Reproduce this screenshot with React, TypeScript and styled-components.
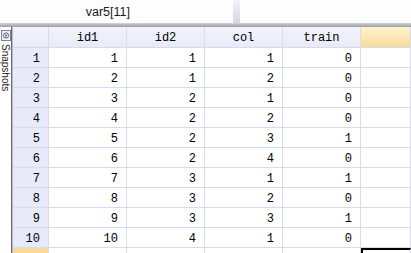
import styled, { createGlobalStyle } from 'styled-components';

const GlobalStyle = createGlobalStyle`
  html, body {
    margin: 0;
    padding: 0;
    background: #ffffff;
    overflow: hidden;
  }
`;

const Window = styled.div`
  width: 411px;
  height: 253px;
  display: flex;
  flex-direction: column;
  overflow: hidden;
  background: #ffffff;
`;

const TopBar = styled.div`
  height: 23px;
  display: flex;
  align-items: stretch;
  background: #fdfdfd;
  flex-shrink: 0;
`;

const CellRef = styled.div`
  width: 229px;
  padding-right: 99px;
  box-sizing: border-box;
  display: flex;
  align-items: center;
  justify-content: flex-end;
  font-family: 'Liberation Sans', Arial, sans-serif;
  font-size: 12.5px;
  color: #1a1a1a;
`;

const Splitter = styled.div`
  width: 7px;
  margin-left: 4px;
  background: linear-gradient(180deg, #f3f4f8 0%, #dfe2ea 60%, #d4d7e0 100%);
`;

const ValueBox = styled.div`
  flex: 1;
`;

const Divider = styled.div`
  height: 4px;
  flex-shrink: 0;
  background: linear-gradient(180deg, #d6d7db 0%, #b4b6bb 50%, #9c9ea3 100%);
`;

const Body = styled.div`
  flex: 1;
  display: flex;
  min-height: 0;
`;

const SideTab = styled.div`
  width: 11px;
  flex-shrink: 0;
  background: #ffffff;
  border-right: 1px solid #6e6e6e;
  display: flex;
  flex-direction: column;
  align-items: center;
  overflow: hidden;
  padding-top: 3px;
`;

const TabText = styled.div`
  writing-mode: vertical-rl;
  font-family: 'Liberation Sans', Arial, sans-serif;
  font-size: 10px;
  line-height: 11px;
  color: #222;
  margin-top: 3px;
  white-space: nowrap;
`;

const Gutter = styled.div`
  width: 1px;
  flex-shrink: 0;
  background: #b9bcc4;
`;

const Grid = styled.div`
  flex: 1;
  display: grid;
  grid-template-columns: 36px repeat(4, 78px) 1fr;
  grid-auto-rows: 20px;
  grid-template-rows: 21px;
  font-family: 'Liberation Mono', 'DejaVu Sans Mono', monospace;
  font-size: 12px;
  color: #000;
  align-content: start;
`;

type Kind = 'head' | 'rowhead' | 'data' | 'active' | 'activeRow' | 'empty';

const backgrounds: Record<Kind, string> = {
  head: 'linear-gradient(180deg, #f1f2fa 0%, #e8ebf7 100%)',
  rowhead: '#e7eaf8',
  data: '#ffffff',
  active: 'linear-gradient(180deg, #fdf3cc 0%, #f7dc9a 100%)',
  activeRow: '#f8da98',
  empty: '#ffffff',
};

const Cell = styled.div<{ $kind: Kind }>`
  box-sizing: border-box;
  border-right: 1px solid #d7dbee;
  border-bottom: 1px solid #d7dbee;
  display: flex;
  align-items: center;
  padding: 2px 8px 0;
  white-space: nowrap;
  justify-content: ${({ $kind }) => ($kind === 'head' ? 'center' : 'flex-end')};
  background: ${({ $kind }) => backgrounds[$kind]};
`;

const Selected = styled(Cell)`
  border-top: 2px solid #000;
  border-left: 2px solid #000;
`;

const rows = [
  [1, 1, 1, 0],
  [2, 1, 2, 0],
  [3, 2, 1, 0],
  [4, 2, 2, 0],
  [5, 2, 3, 1],
  [6, 2, 4, 0],
  [7, 3, 1, 1],
  [8, 3, 2, 0],
  [9, 3, 3, 1],
  [10, 4, 1, 0],
];

const headers = ['id1', 'id2', 'col', 'train'];

export default function App() {
  return (
    <>
      <GlobalStyle />
      <Window>
        <TopBar>
          <CellRef>var5[11]</CellRef>
          <Splitter />
          <ValueBox />
        </TopBar>
        <Divider />
        <Body>
          <SideTab>
            <svg width="10" height="11" viewBox="0 0 10 11">
              <rect x="0.5" y="0.5" width="9" height="10" fill="#eef0f4" stroke="#7b8290" />
              <circle cx="5" cy="5.5" r="2.6" fill="none" stroke="#5b6373" />
              <circle cx="5" cy="5.5" r="1" fill="#5b6373" />
            </svg>
            <TabText>Snapshots</TabText>
          </SideTab>
          <Gutter />
          <Grid>
            <Cell $kind="head" />
            {headers.map((h) => (
              <Cell key={h} $kind="head">
                {h}
              </Cell>
            ))}
            <Cell $kind="active" />
            {rows.map((r, i) => (
              <>
                <Cell key={`n${i}`} $kind="rowhead">
                  {i + 1}
                </Cell>
                {r.map((v, j) => (
                  <Cell key={`c${i}-${j}`} $kind="data">
                    {v}
                  </Cell>
                ))}
                <Cell key={`e${i}`} $kind="empty" />
              </>
            ))}
            <Cell $kind="activeRow" />
            <Cell $kind="empty" />
            <Cell $kind="empty" />
            <Cell $kind="empty" />
            <Cell $kind="empty" />
            <Selected $kind="empty" />
          </Grid>
        </Body>
      </Window>
    </>
  );
}
